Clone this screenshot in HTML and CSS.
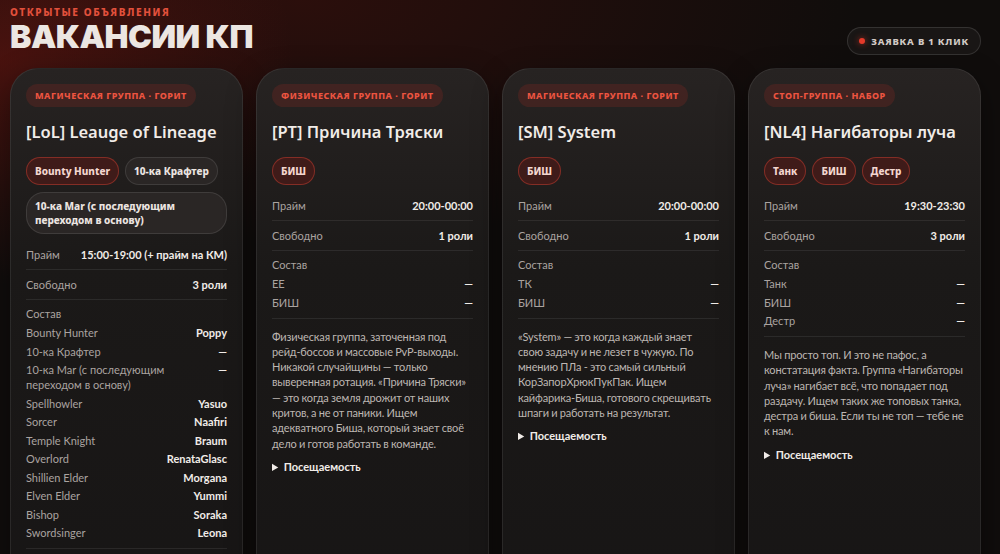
FILE: index.html
```html
<!DOCTYPE html>
<html lang="ru">
<head>
  <meta charset="UTF-8">
  <title>Вакансии КП</title>
  <link rel="stylesheet" href="styles.css">
</head>
<body>
<header class="top">
  <div class="top-title">
    <div class="eyebrow">Открытые объявления</div>
    <h1>Вакансии КП</h1>
  </div>
  <button class="apply"><span class="dot"></span>Заявка в 1 клик</button>
</header>

<main class="cards">

  <section class="card">
    <span class="tag">Магическая группа · горит</span>
    <h2>[LoL] Leauge of Lineage</h2>
    <div class="chips">
      <span class="chip hot">Bounty Hunter</span>
      <span class="chip">10-ка Крафтер</span>
      <span class="chip wide">10-ка Mar (с последующим переходом в основу)</span>
    </div>
    <div class="row"><span class="label">Прайм</span><span class="value">15:00-19:00 (+ прайм на КМ)</span></div>
    <div class="row"><span class="label">Свободно</span><span class="value">3 роли</span></div>
    <div class="roster">
      <div class="label">Состав</div>
      <ul>
        <li><span>Bounty Hunter</span><b>Poppy</b></li>
        <li><span>10-ка Крафтер</span><b>—</b></li>
        <li><span>10-ка Mar (с последующим переходом в основу)</span><b>—</b></li>
        <li><span>Spellhowler</span><b>Yasuo</b></li>
        <li><span>Sorcer</span><b>Naafiri</b></li>
        <li><span>Temple Knight</span><b>Braum</b></li>
        <li><span>Overlord</span><b>RenataGlasc</b></li>
        <li><span>Shillien Elder</span><b>Morgana</b></li>
        <li><span>Elven Elder</span><b>Yummi</b></li>
        <li><span>Bishop</span><b>Soraka</b></li>
        <li><span>Swordsinger</span><b>Leona</b></li>
      </ul>
    </div>
    <p class="about">Магическая группа с опытом и стабильным составом. Ищем тех, кто готов расти вместе с нами.</p>
  </section>

  <section class="card">
    <span class="tag">Физическая группа · горит</span>
    <h2>[PT] Причина Тряски</h2>
    <div class="chips">
      <span class="chip hot">БИШ</span>
    </div>
    <div class="row"><span class="label">Прайм</span><span class="value">20:00-00:00</span></div>
    <div class="row"><span class="label">Свободно</span><span class="value">1 роли</span></div>
    <div class="roster">
      <div class="label">Состав</div>
      <ul>
        <li><span>EE</span><b>—</b></li>
        <li><span>БИШ</span><b>—</b></li>
      </ul>
    </div>
    <p class="about">Физическая группа, заточенная под рейд-боссов и массовые PvP-выходы. Никакой случайщины — только выверенная ротация. «Причина Тряски» — это когда земля дрожит от наших критов, а не от паники. Ищем адекватного Биша, который знает своё дело и готов работать в команде.</p>
    <details><summary>Посещаемость</summary></details>
  </section>

  <section class="card">
    <span class="tag">Магическая группа · горит</span>
    <h2>[SM] System</h2>
    <div class="chips">
      <span class="chip hot">БИШ</span>
    </div>
    <div class="row"><span class="label">Прайм</span><span class="value">20:00-00:00</span></div>
    <div class="row"><span class="label">Свободно</span><span class="value">1 роли</span></div>
    <div class="roster">
      <div class="label">Состав</div>
      <ul>
        <li><span>ТК</span><b>—</b></li>
        <li><span>БИШ</span><b>—</b></li>
      </ul>
    </div>
    <p class="about">«System» — это когда каждый знает свою задачу и не лезет в чужую. По мнению ПЛа - это самый сильный КорЗапорХрюкПукПак. Ищем кайфарика-Биша, готового скрещивать шпаги и работать на результат.</p>
    <details><summary>Посещаемость</summary></details>
  </section>

  <section class="card">
    <span class="tag">Стоп-группа · набор</span>
    <h2>[NL4] Нагибаторы луча</h2>
    <div class="chips">
      <span class="chip hot">Танк</span>
      <span class="chip hot">БИШ</span>
      <span class="chip hot">Дестр</span>
    </div>
    <div class="row"><span class="label">Прайм</span><span class="value">19:30-23:30</span></div>
    <div class="row"><span class="label">Свободно</span><span class="value">3 роли</span></div>
    <div class="roster">
      <div class="label">Состав</div>
      <ul>
        <li><span>Танк</span><b>—</b></li>
        <li><span>БИШ</span><b>—</b></li>
        <li><span>Дестр</span><b>—</b></li>
      </ul>
    </div>
    <p class="about">Мы просто топ. И это не пафос, а констатация факта. Группа «Нагибаторы луча» нагибает всё, что попадает под раздачу. Ищем таких же топовых танка, дестра и биша. Если ты не топ — тебе не к нам.</p>
    <details><summary>Посещаемость</summary></details>
  </section>

</main>
</body>
</html>
```

FILE: styles.css
```css
* {
  box-sizing: border-box;
}

html, body {
  height: 100%;
  overflow: hidden;
  margin: 0;
}

body {
  padding: 0 19px 0 10px;
  font: 11px Lato, "Noto Sans", sans-serif;
  color: #ece6e2;
  background:
    radial-gradient(ellipse 420px 320px at 0 60px, rgba(110, 22, 16, 0.55), transparent 70%),
    radial-gradient(ellipse 700px 300px at 300px 0, rgba(70, 16, 12, 0.5), transparent 80%),
    #100d0c;
}

/* header */

.top {
  display: flex;
  justify-content: space-between;
  align-items: flex-start;
  height: 68px;
}

.top-title {
  padding-top: 5px;
}

.eyebrow {
  font: 800 10px/14px "Noto Sans", sans-serif;
  letter-spacing: 1.6px;
  text-transform: uppercase;
  color: #e2503c;
}

h1 {
  margin: 0;
  font: 900 32px/36px Inter, "Noto Sans", sans-serif;
  letter-spacing: -0.5px;
  text-transform: uppercase;
  color: #ece6e2;
}

.apply {
  display: flex;
  align-items: center;
  gap: 6px;
  height: 28px;
  padding: 0 11px;
  margin-top: 27px;
  border: 1px solid rgba(255, 255, 255, 0.12);
  border-radius: 14px;
  background: rgba(255, 255, 255, 0.04);
  font: 800 9.5px "Noto Sans", sans-serif;
  letter-spacing: 0.8px;
  text-transform: uppercase;
  color: #d2cac5;
}

.apply .dot {
  width: 6px;
  height: 6px;
  border-radius: 50%;
  background: #e53a2a;
  box-shadow: 0 0 6px rgba(229, 58, 42, 0.7);
}

/* cards */

.cards {
  display: grid;
  grid-template-columns: repeat(4, 1fr);
  gap: 13px;
}

.card {
  padding: 15px 15px 20px;
  border: 1px solid rgba(255, 255, 255, 0.08);
  border-radius: 28px;
  background: linear-gradient(180deg, #272322 0%, #1b1918 35%, #171515 100%);
  box-shadow: 0 10px 30px rgba(0, 0, 0, 0.4);
}

.tag {
  display: inline-block;
  height: 23px;
  padding: 0 9px;
  border-radius: 12px;
  background: rgba(190, 45, 35, 0.18);
  font: 800 9px/23px "Noto Sans", sans-serif;
  letter-spacing: 0.5px;
  text-transform: uppercase;
  color: #ec5440;
}

h2 {
  margin: 14px 0 14px;
  font: 600 16.5px/22px "Noto Sans", sans-serif;
  color: #f1ece8;
}

.chips {
  display: flex;
  flex-wrap: wrap;
  gap: 7px 6px;
  margin-bottom: 6px;
}

.chip {
  display: inline-block;
  padding: 6px 8px;
  border: 1px solid rgba(255, 255, 255, 0.1);
  border-radius: 14px;
  background: #2a2625;
  font: 800 10px/14px "Noto Sans", sans-serif;
  color: #ebe4e0;
}

.chip.hot {
  border-color: rgba(190, 60, 48, 0.55);
  background: #3f1b19;
  color: #f3d6cf;
}

.chip.wide {
  border-radius: 18px;
}

.row {
  display: flex;
  justify-content: space-between;
  align-items: flex-start;
  gap: 10px;
  padding: 7px 0;
  line-height: 15px;
  border-bottom: 1px solid rgba(255, 255, 255, 0.08);
}

.label {
  color: #aaa3a0;
}

.value {
  font-weight: 700;
  text-align: right;
  color: #f1ece8;
}

.roster {
  padding: 6px 0 8px;
  line-height: 15px;
  border-bottom: 1px solid rgba(255, 255, 255, 0.08);
}

.roster ul {
  list-style: none;
  margin: 4px 0 0;
  padding: 0;
  display: flex;
  flex-direction: column;
  gap: 3.5px;
}

.roster li {
  display: flex;
  justify-content: space-between;
  gap: 20px;
  color: #aaa3a0;
}

.roster li b {
  color: #f1ece8;
}

.about {
  margin: 10px 0 8px;
  line-height: 15.3px;
  letter-spacing: -0.15px;
  word-spacing: -0.3px;
  color: #bdb6b2;
}

summary {
  font-weight: 700;
  line-height: 16px;
  color: #f1ece8;
  cursor: pointer;
}
```
